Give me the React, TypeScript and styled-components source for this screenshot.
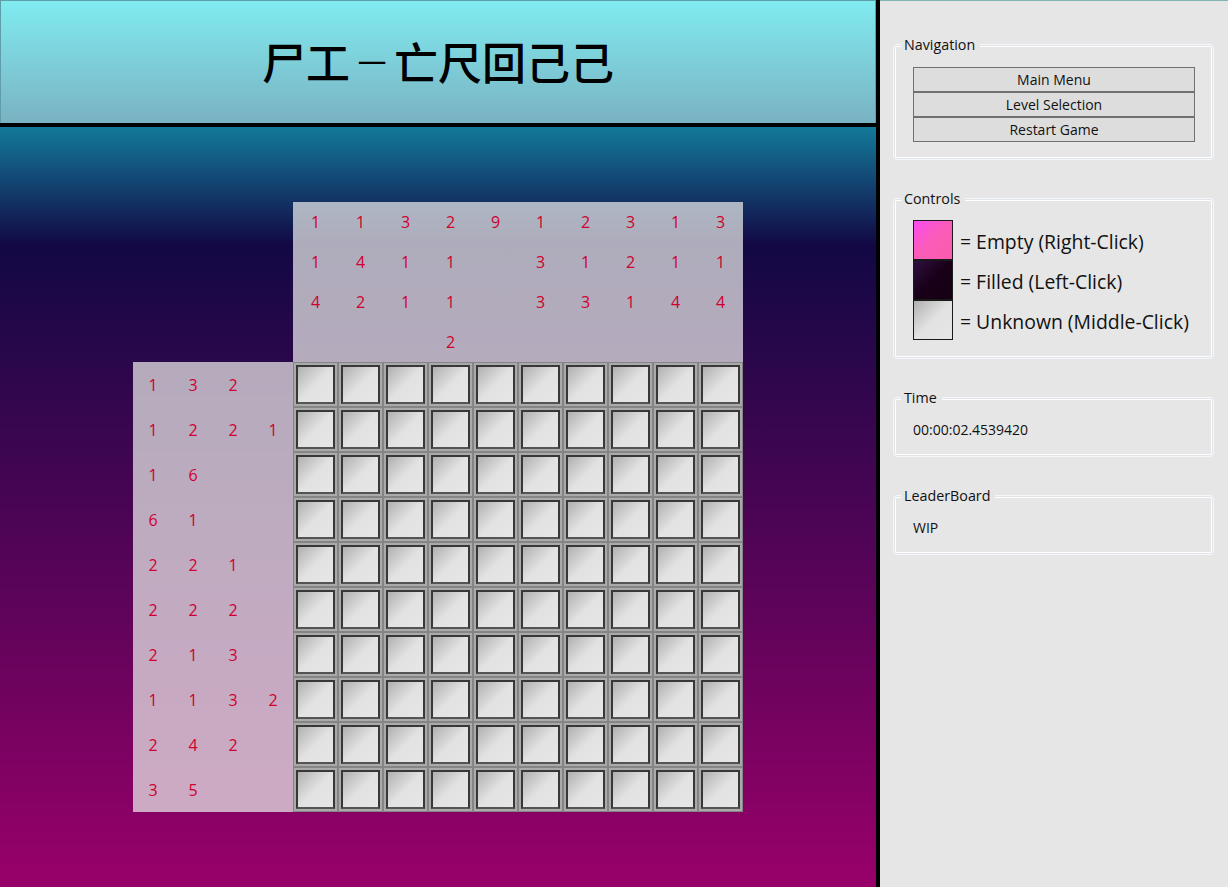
import React from 'react';
import styled, { createGlobalStyle } from 'styled-components';

const GlobalStyle = createGlobalStyle`
  html, body {
    margin: 0;
    padding: 0;
    height: 100%;
    overflow: hidden;
  }
  body {
    font-family: "Open Sans", "Noto Sans", "Noto Sans CJK SC", sans-serif;
    color: #111;
  }
`;

const Window = styled.div`
  width: 1228px;
  height: 887px;
  display: grid;
  grid-template-columns: 876px 4px 348px;
  background: #000;
`;

const GameColumn = styled.div`
  display: flex;
  flex-direction: column;
  height: 887px;
`;

const TitleBar = styled.header`
  height: 123px;
  flex: none;
  box-sizing: border-box;
  border: 1px solid #5f9ea8;
  border-bottom: none;
  background: linear-gradient(180deg, #80ebf0 0%, #7ab2c2 100%);
  display: flex;
  align-items: center;
  justify-content: center;
`;

const Title = styled.h1`
  margin: 0 0 2px;
  font-family: "Noto Sans CJK SC", "Noto Sans", sans-serif;
  font-size: 44px;
  font-weight: 500;
  line-height: 1;
  color: #000;
  white-space: nowrap;
`;

const TitleDash = styled.span`
  display: inline-block;
  font-weight: 300;
  transform: scaleX(0.66);
`;

const TitleRule = styled.div`
  height: 4px;
  flex: none;
  background: #000;
`;

const Playfield = styled.main`
  flex: 1;
  box-sizing: border-box;
  padding: 75px 0 0 133px;
  background: linear-gradient(180deg, #137a9a 0%, #120844 15.5%, #99006a 100%);
`;

const Puzzle = styled.div`
  display: grid;
  grid-template-columns: 160px 450px;
  grid-template-rows: 160px 450px;
`;

const ClueCorner = styled.div``;

const TopClues = styled.div`
  display: grid;
  grid-template-columns: repeat(10, 45px);
  grid-auto-rows: 40px;
  background: rgba(230, 230, 230, 0.74);
`;

const LeftClues = styled.div`
  display: grid;
  grid-template-rows: repeat(10, 45px);
  background: rgba(230, 230, 230, 0.74);
`;

const LeftRow = styled.div`
  display: grid;
  grid-template-columns: repeat(4, 40px);
`;

const Clue = styled.span`
  display: flex;
  align-items: center;
  justify-content: center;
  font-size: 16px;
  color: #d0002e;
`;

const Board = styled.div`
  display: grid;
  grid-template-columns: repeat(10, 45px);
  grid-template-rows: repeat(10, 45px);
  background: #808080;
`;

const Cell = styled.div`
  box-sizing: border-box;
  width: 45px;
  height: 45px;
  border: 1px solid #858585;
  padding: 2px;
  background: #aaaaaa;
`;

const CellFace = styled.div`
  box-sizing: border-box;
  width: 100%;
  height: 100%;
  border: 2px solid #383838;
  border-bottom-color: #545454;
  background: linear-gradient(135deg, #b0b0b0 0%, #e2e2e2 50%, #e6e6e6 100%);
`;

const Sidebar = styled.aside`
  box-sizing: border-box;
  height: 887px;
  border-top: 1px solid #7fb5b5;
  background: #e6e6e6;
  padding: 43px 14px 0 13px;
  display: flex;
  flex-direction: column;
`;

const Group = styled.fieldset<{ $height: number; $gap: number }>`
  box-sizing: border-box;
  position: relative;
  margin: 0 0 ${({ $gap }) => $gap}px;
  min-width: 0;
  height: ${({ $height }) => $height}px;
  padding: 0;
  border: 1px solid #f4f8fb;
  border-radius: 4px;
  box-shadow: inset 0 0 0 1px #e0e4e8, inset 0 0 0 2px #ffffff;
`;

const GroupLabel = styled.span`
  position: absolute;
  top: -8px;
  left: 7px;
  padding: 0 5px 0 3px;
  background: #e6e6e6;
  font-size: 14.3px;
  line-height: 16px;
`;

const NavList = styled.div`
  display: flex;
  flex-direction: column;
  padding: 22px 18px 0 19px;
`;

const NavButton = styled.button`
  box-sizing: border-box;
  height: 25px;
  margin: 0;
  padding: 0;
  border: 1px solid #707070;
  background: #dddddd;
  font-family: inherit;
  font-size: 14px;
  color: #111;
`;

const ControlList = styled.div`
  display: flex;
  flex-direction: column;
  padding: 21px 0 0 19px;
`;

const ControlRow = styled.div`
  display: flex;
  align-items: center;
  height: 40px;
  font-size: 19.4px;
  gap: 7px;
  white-space: nowrap;
`;

const ControlLabel = styled.span`
  margin-top: 2px;
`;

const Swatch = styled.div<{ $fill: string }>`
  box-sizing: border-box;
  flex: none;
  width: 40px;
  height: 40px;
  border: 1px solid #1a1a1a;
  background: ${({ $fill }) => $fill};
`;

const GroupText = styled.div`
  padding: 22px 0 0 19px;
  font-size: 14px;
  line-height: 20px;
`;

const topClues: (number | null)[][] = [
  [1, 1, 3, 2, 9, 1, 2, 3, 1, 3],
  [1, 4, 1, 1, null, 3, 1, 2, 1, 1],
  [4, 2, 1, 1, null, 3, 3, 1, 4, 4],
  [null, null, null, 2, null, null, null, null, null, null],
];

const leftClues: number[][] = [
  [1, 3, 2],
  [1, 2, 2, 1],
  [1, 6],
  [6, 1],
  [2, 2, 1],
  [2, 2, 2],
  [2, 1, 3],
  [1, 1, 3, 2],
  [2, 4, 2],
  [3, 5],
];

const controls = [
  { label: '= Empty (Right-Click)', fill: 'linear-gradient(135deg, #fa4cf0 0%, #fb5cb8 50%, #fb5cae 100%)' },
  { label: '= Filled (Left-Click)', fill: 'linear-gradient(135deg, #2e1040 0%, #190018 50%, #160014 100%)' },
  { label: '= Unknown (Middle-Click)', fill: 'linear-gradient(135deg, #b0b0b0 0%, #e2e2e2 50%, #e6e6e6 100%)' },
];

export default function App() {
  return (
    <Window>
      <GlobalStyle />
      <GameColumn>
        <TitleBar>
          <Title>
            尸工<TitleDash>一</TitleDash>亡尺回己己
          </Title>
        </TitleBar>
        <TitleRule />
        <Playfield>
          <Puzzle>
            <ClueCorner />
            <TopClues>
              {topClues.flatMap((row, r) =>
                row.map((n, c) => <Clue key={`${r}-${c}`}>{n}</Clue>),
              )}
            </TopClues>
            <LeftClues>
              {leftClues.map((row, r) => (
                <LeftRow key={r}>
                  {row.map((n, c) => (
                    <Clue key={c}>{n}</Clue>
                  ))}
                </LeftRow>
              ))}
            </LeftClues>
            <Board>
              {Array.from({ length: 100 }, (_, i) => (
                <Cell key={i}>
                  <CellFace />
                </Cell>
              ))}
            </Board>
          </Puzzle>
        </Playfield>
      </GameColumn>
      <div />
      <Sidebar>
        <Group $height={116} $gap={38}>
          <GroupLabel>Navigation</GroupLabel>
          <NavList>
            <NavButton>Main Menu</NavButton>
            <NavButton>Level Selection</NavButton>
            <NavButton>Restart Game</NavButton>
          </NavList>
        </Group>
        <Group $height={161} $gap={38}>
          <GroupLabel>Controls</GroupLabel>
          <ControlList>
            {controls.map((item) => (
              <ControlRow key={item.label}>
                <Swatch $fill={item.fill} />
                <ControlLabel>{item.label}</ControlLabel>
              </ControlRow>
            ))}
          </ControlList>
        </Group>
        <Group $height={60} $gap={38}>
          <GroupLabel>Time</GroupLabel>
          <GroupText>00:00:02.4539420</GroupText>
        </Group>
        <Group $height={60} $gap={0}>
          <GroupLabel>LeaderBoard</GroupLabel>
          <GroupText>WIP</GroupText>
        </Group>
      </Sidebar>
    </Window>
  );
}
